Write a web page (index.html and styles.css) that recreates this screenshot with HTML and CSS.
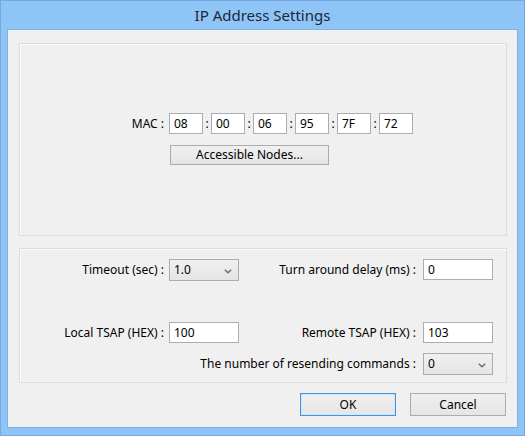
FILE: index.html
```html
<!DOCTYPE html>
<html>
<head>
<meta charset="utf-8">
<title>IP Address Settings</title>
<link rel="stylesheet" href="styles.css">
</head>
<body>
<div class="window">
  <div class="titlebar">IP Address Settings</div>
  <div class="client">
    <div class="group group-mac">
      <div class="mac-row">
        <span class="label">MAC :</span>
        <span class="field mac">08</span><span class="colon">:</span>
        <span class="field mac">00</span><span class="colon">:</span>
        <span class="field mac">06</span><span class="colon">:</span>
        <span class="field mac">95</span><span class="colon">:</span>
        <span class="field mac">7F</span><span class="colon">:</span>
        <span class="field mac">72</span>
      </div>
      <div class="nodes-row">
        <button class="btn nodes">Accessible Nodes...</button>
      </div>
    </div>
    <div class="group group-params">
      <div class="prow prow-1">
        <span class="label">Timeout (sec) :</span>
        <span class="combo">1.0<svg class="chev" width="8" height="5" viewBox="0 0 8 5"><path d="M0.8 0.8 L4 3.8 L7.2 0.8" fill="none" stroke="#6d6d6d" stroke-width="1.4"/></svg></span>
        <span class="label label-r">Turn around delay (ms) :</span>
        <span class="field wide">0</span>
      </div>
      <div class="prow prow-2">
        <span class="label">Local TSAP (HEX) :</span>
        <span class="field wide">100</span>
        <span class="label label-r">Remote TSAP (HEX) :</span>
        <span class="field wide">103</span>
      </div>
      <div class="prow prow-3">
        <span class="label label-r span3">The number of resending commands :</span>
        <span class="combo">0<svg class="chev" width="8" height="5" viewBox="0 0 8 5"><path d="M0.8 0.8 L4 3.8 L7.2 0.8" fill="none" stroke="#6d6d6d" stroke-width="1.4"/></svg></span>
      </div>
    </div>
    <div class="actions">
      <button class="btn default">OK</button>
      <button class="btn">Cancel</button>
    </div>
  </div>
</div>
</body>
</html>
```
FILE: styles.css
```css
* { box-sizing: border-box; }
html, body { margin: 0; padding: 0; background: #8fc4f6; }
body {
  font-family: "Noto Sans", "Open Sans", sans-serif;
  font-size: 12px;
  color: #000;
}
.window {
  width: 525px;
  height: 436px;
  border: 1px solid #74aae0;
  background: #8fc4f6;
  display: flex;
  flex-direction: column;
}
.titlebar {
  height: 29px;
  flex: none;
  display: flex;
  align-items: center;
  justify-content: center;
  font-size: 15px;
  color: #1c2838;
  padding-bottom: 1px;
}
.client {
  flex: 1;
  margin: 0 7px 8px 7px;
  background: #f0f0f0;
  box-shadow: 0 0 0 1px #7bb2e8;
  padding: 13px 10px 11px 11px;
  display: flex;
  flex-direction: column;
}
.group {
  border: 1px solid #dcdcdc;
  box-shadow: inset 1px 1px 0 #fbfbfb;
}
.group-mac {
  height: 193px;
  display: flex;
  flex-direction: column;
  justify-content: center;
  gap: 11px;
  padding-bottom: 1px;
}
.mac-row {
  display: flex;
  align-items: center;
}
.label {
  white-space: nowrap;
  line-height: 16px;
}
.mac-row .label {
  width: 149px;
  text-align: right;
  padding-right: 5px;
}
.field {
  display: block;
  height: 21px;
  background: #fff;
  border: 1px solid #abadb3;
  padding-left: 4px;
  line-height: 19px;
  white-space: nowrap;
}
.mac { width: 34px; }
.colon {
  width: 8px;
  text-align: center;
  line-height: 16px;
}
.nodes-row {
  display: flex;
  padding-left: 150px;
}
.btn {
  font: inherit;
  color: #000;
  border: 1px solid #acacac;
  background: linear-gradient(#f0f0f0, #e5e5e5);
  padding: 0;
  margin: 0;
  height: 23px;
  width: 96px;
  border-radius: 0;
}
.btn.nodes {
  width: 159px;
  height: 20px;
  line-height: 16px;
}
.btn.default {
  border-color: #3f95df;
  box-shadow: inset 0 0 0 1px #d2e6f8;
}
.group-params {
  margin-top: 12px;
  height: 135px;
  padding: 10px 12px 7px 0;
  display: flex;
  flex-direction: column;
}
.prow {
  display: grid;
  grid-template-columns: 149px 70px 184px 70px;
  align-items: start;
}
.prow .label {
  justify-self: end;
  align-self: center;
  padding-right: 5px;
}
.prow .label-r { padding-right: 7px; }
.prow .span3 { grid-column: 1 / 4; }
.prow-2 { margin-top: 41px; }
.prow-3 { margin-top: 10px; }
.wide { width: 70px; }
.combo {
  position: relative;
  display: block;
  width: 70px;
  height: 22px;
  border: 1px solid #acacac;
  background: linear-gradient(#f0f0f0, #e5e5e5);
  padding-left: 4px;
  line-height: 20px;
}
.chev {
  position: absolute;
  right: 6px;
  top: 9px;
}
.actions {
  margin-top: 10px;
  display: flex;
  justify-content: flex-end;
  gap: 14px;
  padding-right: 1px;
}
```
